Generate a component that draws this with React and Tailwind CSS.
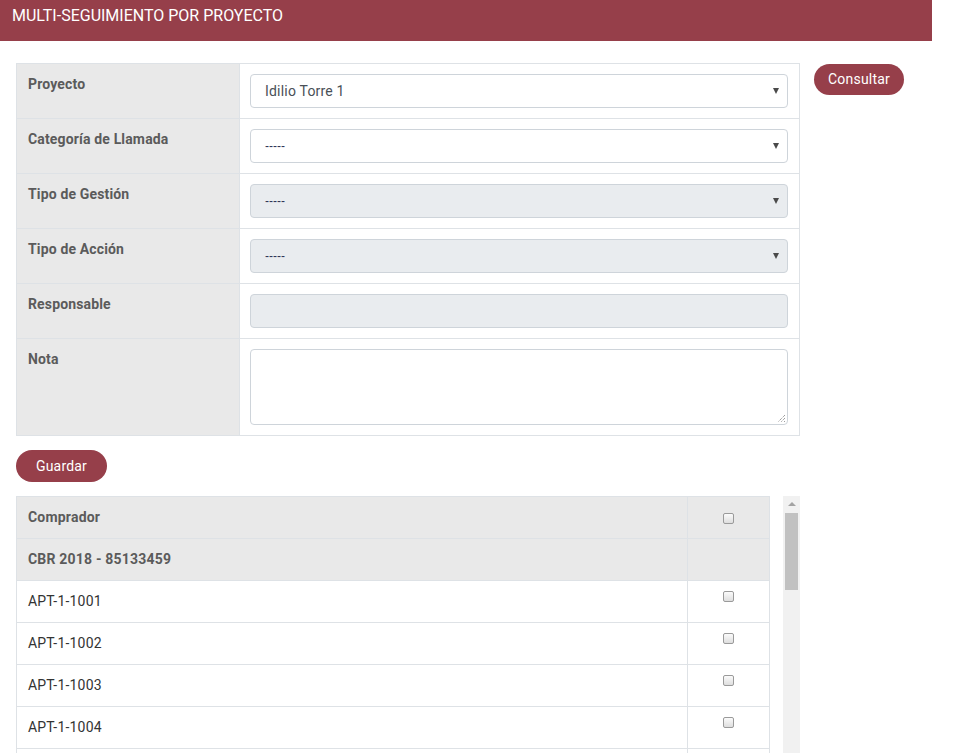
import React from "react";

const Arrow = () => (
  <span className="absolute right-[8px] top-1/2 -translate-y-1/2 w-0 h-0 border-l-[3.5px] border-r-[3.5px] border-t-[6px] border-l-transparent border-r-transparent border-t-[#4a4a4a]" />
);

const Check = () => (
  <span className="inline-block w-[11px] h-[11px] rounded-[2px] border border-[#9a9a9a] bg-gradient-to-b from-[#fbfbfb] to-[#dedede]" />
);

function FormRow({ label, children }) {
  return (
    <div className="flex border-b border-[#dee2e6] last:border-b-0">
      <div className="w-[223px] shrink-0 bg-[#e9e9e9] border-r border-[#dee2e6] pl-[11px] pt-[10px] text-[14px] font-bold text-[#5b5b5b] leading-[20px] tracking-[0.15px]">
        {label}
      </div>
      <div className="flex-1 pl-[10px] pr-[11px] py-[10px]">{children}</div>
    </div>
  );
}

function Select({ value, disabled }) {
  return (
    <div
      className={`relative h-[34px] rounded-[4px] border border-[#ced4da] flex items-center pl-[14px] text-[14px] text-[#495057] ${
        disabled ? "bg-[#e9ecef]" : "bg-white"
      }`}
    >
      {value === "-----" ? (
        <span className="text-[12px] tracking-[0px] text-[#2f3355]" style={{ fontFamily: "'Liberation Sans', sans-serif" }}>-----</span>
      ) : (
        <span className="tracking-[0.2px]">{value}</span>
      )}
      <Arrow />
    </div>
  );
}

export default function App() {
  const rows = ["APT-1-1001", "APT-1-1002", "APT-1-1003", "APT-1-1004"];
  return (
    <div className="w-[958px] h-[753px] overflow-hidden bg-white" style={{ fontFamily: "Roboto, 'Liberation Sans', sans-serif" }}>
      <div className="w-[932px] h-[41px] bg-[#963f4a] flex items-center pl-[12px] pb-[9px] text-white text-[16px]">
        MULTI-SEGUIMIENTO POR PROYECTO
      </div>
      <div className="px-[16px] pt-[22px]">
        <div className="flex items-start gap-[14px]">
          <div className="w-[784px] border border-[#dee2e6]">
            <FormRow label="Proyecto">
              <Select value="Idilio Torre 1" />
            </FormRow>
            <FormRow label="Categoría de Llamada">
              <Select value="-----" />
            </FormRow>
            <FormRow label="Tipo de Gestión">
              <Select value="-----" disabled />
            </FormRow>
            <FormRow label="Tipo de Acción">
              <Select value="-----" disabled />
            </FormRow>
            <FormRow label="Responsable">
              <div className="h-[34px] rounded-[4px] border border-[#ced4da] bg-[#e9ecef]" />
            </FormRow>
            <FormRow label="Nota">
              <div className="relative h-[76px] rounded-[4px] border border-[#ced4da] bg-white">
                <svg className="absolute right-[1px] bottom-[1px]" width="9" height="9" viewBox="0 0 9 9">
                  <path d="M8 1L1 8M8 4L4 8M8 7L7 8" stroke="#777" strokeWidth="1" strokeDasharray="1 1" />
                </svg>
              </div>
            </FormRow>
          </div>
          <button className="mt-[1px] h-[31px] w-[90px] rounded-full bg-[#963f4a] text-white text-[14px] tracking-[0.2px]">
            Consultar
          </button>
        </div>
        <button className="mt-[14px] h-[32px] w-[91px] rounded-full bg-[#963f4a] text-white text-[14px] tracking-[0.2px]">
          Guardar
        </button>
        <div className="mt-[14px] flex gap-[13px] h-[257px] overflow-hidden">
          <div className="w-[754px] border border-[#dee2e6] self-start">
            <div className="flex h-[42px] bg-[#e9e9e9] border-b border-[#dee2e6]">
              <div className="flex-1 flex items-center pl-[11px] text-[14px] font-bold text-[#5b5b5b] tracking-[0.2px]">Comprador</div>
              <div className="w-[82px] border-l border-[#dee2e6] flex items-center justify-center pt-[2px]">
                <Check />
              </div>
            </div>
            <div className="flex h-[42px] bg-[#e9e9e9] border-b border-[#dee2e6]">
              <div className="flex-1 flex items-center pl-[11px] text-[14px] font-bold text-[#5b5b5b] tracking-[0.2px]">CBR 2018 - 85133459</div>
              <div className="w-[82px] border-l border-[#dee2e6]" />
            </div>
            {rows.map((r) => (
              <div key={r} className="flex h-[42px] bg-white border-b border-[#dee2e6]">
                <div className="flex-1 flex items-center pl-[11px] text-[14px] text-[#333] tracking-[0.2px]">{r}</div>
                <div className="w-[82px] border-l border-[#dee2e6] flex justify-center pt-[10px]">
                  <Check />
                </div>
              </div>
            ))}
            <div className="flex h-[42px] bg-white">
              <div className="flex-1" />
              <div className="w-[82px] border-l border-[#dee2e6]" />
            </div>
          </div>
          <div className="w-[17px] h-full bg-[#f1f1f1] relative">
            <span className="absolute left-[5px] top-[6px] w-0 h-0 border-l-[4px] border-r-[4px] border-b-[4px] border-l-transparent border-r-transparent border-b-[#a3a3a3]" />
            <div className="absolute left-[2px] top-[17px] w-[13px] h-[77px] bg-[#c1c1c1]" />
          </div>
        </div>
      </div>
    </div>
  );
}
